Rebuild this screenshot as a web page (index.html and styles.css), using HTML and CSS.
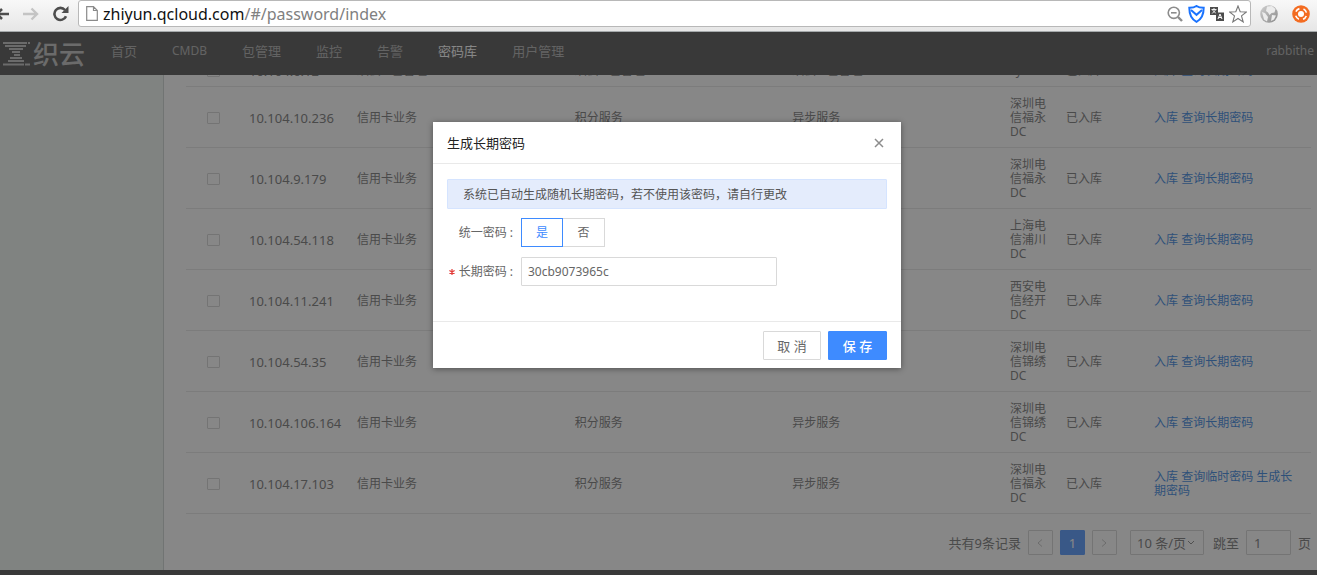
FILE: index.html
```html
<!DOCTYPE html>
<html lang="zh-CN">
<head>
<meta charset="utf-8">
<title>织云 - 密码库</title>
<link rel="stylesheet" href="styles.css">
</head>
<body>
<div class="window">
  <div class="toolbar">
    <button class="tool back" type="button" aria-label="后退"><svg width="9" height="16" viewBox="0 0 9 16"><path d="M9 8H0M2 3L-3 8l5 5" fill="none" stroke="#4d4d4d" stroke-width="2.6"/></svg></button>
    <button class="tool" type="button" aria-label="前进"><svg width="16" height="16" viewBox="0 0 16 16"><path d="M0 8h14M8.500 2.500L14 8l-5.500 5.500" fill="none" stroke="#c4c4c4" stroke-width="2.400"/></svg></button>
    <button class="tool" type="button" aria-label="刷新"><svg width="16" height="16" viewBox="0 0 16 16"><path d="M13 10.200A6 6 0 1 1 12 4" fill="none" stroke="#4d4d4d" stroke-width="2.600"/><path d="M15.500 0v7h-7z" fill="#4d4d4d"/></svg></button>
    <div class="omnibox">
      <svg width="12" height="15" viewBox="0 0 12 15"><path d="M.7.700h6.800l3.800 3.800v9.800H.7zM7.500.700v3.800h3.800" fill="#fff" stroke="#8a8a8a" stroke-width="1.200"/></svg>
      <div class="url">zhiyun.qcloud.com<span>/#/password/index</span></div>
      <svg width="16" height="16" viewBox="0 0 16 16"><circle cx="6.800" cy="6.800" r="5.600" fill="none" stroke="#8c8c8c" stroke-width="1.600"/><path d="M4 6.800h5.600" stroke="#8c8c8c" stroke-width="1.600"/><path d="M11 11l4 4" stroke="#8c8c8c" stroke-width="2.400"/></svg>
      <svg width="17" height="18" viewBox="0 0 17 18"><path d="M8.500 1c2 1.500 4.500 1.800 7.200 1.800 0 6-1 11-7.200 14C2.300 13.800 1.300 8.800 1.300 2.800 4 2.800 6.500 2.500 8.500 1z" fill="#fff" stroke="#1a73ff" stroke-width="2"/><path d="M3 5l5.500 4.800L14 5" fill="none" stroke="#1a73ff" stroke-width="2"/></svg>
      <svg width="14" height="14" viewBox="0 0 14 14"><path d="M0 0h8v8H0z" fill="#4d4d4d"/><path d="M1.500 2.500h5M4 1v1.500M2.200 6.500L5.500 3M2.500 3l3.500 3.500" stroke="#fff" stroke-width=".9"/><path d="M6 5.500h8V14H6z" fill="#4d4d4d"/><path d="M8 12l2-5 2 5M8.800 10.500h2.400" fill="none" stroke="#fff"/></svg>
      <svg width="18" height="18" viewBox="0 0 18 18"><path d="M9 1l2.200 5.800 6.200.2-4.900 3.900 1.700 6L9 13.500l-5.200 3.400 1.700-6L.6 7l6.200-.2z" fill="#fff" stroke="#777" stroke-width="1.100"/></svg>
    </div>
    <svg width="18" height="18" viewBox="0 0 18 18"><defs><linearGradient id="globe" x2="1" y2="1"><stop stop-color="#d0d0d0"/><stop offset="1" stop-color="#8a8a8a"/></linearGradient></defs><circle cx="9" cy="9" r="8.800" fill="url(#globe)"/><path d="M7 1.500l5-.5 3.500 3-1 3.500-3 .5-2 2-1.500-2.500L6 6zM2 7l3 1 3 4-1 4.500-3-2zM12 10l4 .5-2 4-3 1.500z" fill="#ececec"/></svg>
    <svg width="18" height="18" viewBox="0 0 18 18"><circle cx="9" cy="9" r="8.800" fill="#f36c21"/><circle cx="9" cy="9" r="3" fill="#fff"/><circle cx="9" cy="9" r="5.600" fill="none" stroke="#fff" stroke-width="1.600" stroke-dasharray="4.600 4.200" transform="rotate(20 9 9)"/></svg>
  </div>

  <div class="app">
    <header class="header">
      <a class="logo" href="#"><svg width="27" height="24" viewBox="0 0 27 24"><path d="M0 1h24M25 1h2M2 4h21M6 7h14M9 10h8M11 13h6M7 16h12M5 19h16M0 22.500h21M22 22.500h5" stroke="#b9b9b9" stroke-width="1.800"/></svg><span>织云</span></a>
      <nav class="nav">
        <a href="#">首页</a><a class="latin" href="#">CMDB</a><a href="#">包管理</a><a href="#">监控</a><a href="#">告警</a><a class="current" href="#">密码库</a><a href="#">用户管理</a>
      </nav>
      <a class="user latin" href="#">rabbithe</a>
    </header>
    <div class="content">
      <aside class="sidebar"></aside>
      <main class="main">
        <table class="hosts">
          <colgroup><col class="c-check"><col class="c-ip"><col><col><col><col class="c-room"><col class="c-state"><col class="c-ops"></colgroup>
          <tbody>
            <tr><td><input type="checkbox" aria-label="10.104.6.12"></td><td class="ip">10.104.6.12</td><td>织云 - 包管理</td><td>织云 - 包管理</td><td>织云 - 包管理</td><td>sy</td><td>已入库</td><td><a href="#">入库</a> <a href="#">查询长期密码</a></td></tr>
            <tr><td><input type="checkbox" aria-label="10.104.10.236"></td><td class="ip">10.104.10.236</td><td>信用卡业务</td><td>积分服务</td><td>异步服务</td><td>深圳电信福永DC</td><td>已入库</td><td><a href="#">入库</a> <a href="#">查询长期密码</a></td></tr>
            <tr><td><input type="checkbox" aria-label="10.104.9.179"></td><td class="ip">10.104.9.179</td><td>信用卡业务</td><td>积分服务</td><td>异步服务</td><td>深圳电信福永DC</td><td>已入库</td><td><a href="#">入库</a> <a href="#">查询长期密码</a></td></tr>
            <tr><td><input type="checkbox" aria-label="10.104.54.118"></td><td class="ip">10.104.54.118</td><td>信用卡业务</td><td>积分服务</td><td>异步服务</td><td>上海电信浦川DC</td><td>已入库</td><td><a href="#">入库</a> <a href="#">查询长期密码</a></td></tr>
            <tr><td><input type="checkbox" aria-label="10.104.11.241"></td><td class="ip">10.104.11.241</td><td>信用卡业务</td><td>积分服务</td><td>异步服务</td><td>西安电信经开DC</td><td>已入库</td><td><a href="#">入库</a> <a href="#">查询长期密码</a></td></tr>
            <tr><td><input type="checkbox" aria-label="10.104.54.35"></td><td class="ip">10.104.54.35</td><td>信用卡业务</td><td>积分服务</td><td>异步服务</td><td>深圳电信锦绣DC</td><td>已入库</td><td><a href="#">入库</a> <a href="#">查询长期密码</a></td></tr>
            <tr><td><input type="checkbox" aria-label="10.104.106.164"></td><td class="ip">10.104.106.164</td><td>信用卡业务</td><td>积分服务</td><td>异步服务</td><td>深圳电信锦绣DC</td><td>已入库</td><td><a href="#">入库</a> <a href="#">查询长期密码</a></td></tr>
            <tr><td><input type="checkbox" aria-label="10.104.17.103"></td><td class="ip">10.104.17.103</td><td>信用卡业务</td><td>积分服务</td><td>异步服务</td><td>深圳电信福永DC</td><td>已入库</td><td><a href="#">入库</a> <a href="#">查询临时密码</a> <a href="#">生成长期密码</a></td></tr>
          </tbody>
        </table>
        <div class="pager">
          <span>共有9条记录</span>
          <button class="page" type="button" aria-label="上一页"><svg width="6" height="8" viewBox="0 0 6 8"><path d="M5 .5L1 4l4 3.500" fill="none" stroke="#bbb"/></svg></button>
          <button class="page active" type="button">1</button>
          <button class="page" type="button" aria-label="下一页"><svg width="6" height="8" viewBox="0 0 6 8"><path d="M1 .5L5 4 1 7.500" fill="none" stroke="#bbb"/></svg></button>
          <span class="size"><select aria-label="每页条数"><option>10 条/页</option></select><svg width="8" height="6" viewBox="0 0 8 6"><path d="M1 1l3 3 3-3" fill="none" stroke="#777"/></svg></span>
          <label for="jump">跳至</label>
          <input class="jump" id="jump" type="text" value="1">
          <span>页</span>
        </div>
      </main>
    </div>
    <footer class="footer"></footer>

    <div class="mask">
      <form class="dialog" role="dialog" aria-labelledby="dialog-title">
        <div class="dialog-head">
          <h2 id="dialog-title">生成长期密码</h2>
          <button class="close" type="button" aria-label="关闭"><svg width="10" height="10" viewBox="0 0 10 10"><path d="M1 1l8 8M9 1L1 9" stroke="#8c8c8c" stroke-width="1.500"/></svg></button>
        </div>
        <div class="dialog-body">
          <p class="notice">系统已自动生成随机长期密码，若不使用该密码，请自行更改</p>
          <div class="field" role="radiogroup" aria-labelledby="unified">
            <span class="label" id="unified">统一密码 :</span>
            <div class="choice">
              <label><input type="radio" name="unified" checked>是</label><label><input type="radio" name="unified">否</label>
            </div>
          </div>
          <div class="field">
            <label class="label" for="password"><svg width="6" height="6" viewBox="0 0 6 6"><path d="M3 0v6M.4 1.500l5.200 3M5.600 1.500l-5.200 3" stroke="#e23c39" stroke-width="1.200"/></svg>长期密码 :</label>
            <input class="text" id="password" type="text" value="30cb9073965c">
          </div>
        </div>
        <div class="dialog-foot">
          <button class="btn" type="button">取 消</button>
          <button class="btn primary" type="submit">保 存</button>
        </div>
      </form>
    </div>
  </div>
</div>
</body>
</html>
```

FILE: styles.css
```css
* { box-sizing: border-box; }
body {
  margin: 0;
  font: 12px/14px "Noto Sans", "Noto Sans CJK SC", sans-serif;
  color: #666;
}
a { color: #2277dd; text-decoration: none; }
button, input, select { font: inherit; color: inherit; margin: 0; }
button { cursor: pointer; }
svg { display: block; flex: none; }

.window { display: flex; flex-direction: column; height: 100vh; }

/* Browser toolbar */
.toolbar {
  display: flex;
  align-items: center;
  gap: 14px;
  flex: none;
  height: 32px;
  padding: 0 7px 4px 0;
  background: linear-gradient(#f8f8f8, #e6e6e6);
  border-bottom: 1px solid #a5a9ab;
}
.tool { padding: 0; border: 0; background: none; }
.omnibox {
  display: flex;
  align-items: center;
  gap: 5px;
  flex: 1;
  height: 27px;
  margin: 0 -5px;
  padding: 0 3px 0 7px;
  background: #fff;
  border: 1px solid #b8b8b8;
  border-radius: 3px;
}
.url { flex: 1; font-size: 16px; line-height: 24px; color: #111; }
.url span { color: #808080; }

/* Application */
.app { position: relative; display: flex; flex-direction: column; flex: 1; min-height: 0; }
.header {
  display: flex;
  align-items: center;
  flex: none;
  height: 43px;
  padding: 0 3px;
  background: #3e3e3e;
  font-size: 13px;
}
.logo { display: flex; align-items: center; gap: 3px; color: #b9b9b9; font-size: 26px; line-height: 32px; font-weight: 500; }
.nav { display: flex; flex: 1; gap: 35px; padding: 0 0 6px 26px; }
.nav a, .user { color: #a5a5a5; line-height: 18px; }
.nav .current { color: #fff; }
.user { padding-bottom: 6px; }
.latin { font-size: 12px; }
.content { display: flex; flex: 1; min-height: 0; }
.sidebar { flex: none; width: 164px; background: #edf5f0; border-right: 1px solid #c9cfcc; }
.main {
  display: flex;
  flex-direction: column;
  justify-content: flex-end;
  flex: 1;
  min-width: 0;
  overflow: hidden;
  padding: 0 6px 15px 22px;
  background: #fff;
}
.footer { flex: none; height: 5px; background: #3e3e3e; }

.hosts { width: 100%; table-layout: fixed; border-collapse: collapse; }
.hosts td { padding: 10px 8px 8px; border-bottom: 1px solid #e3e3e3; }
.hosts td:first-child { text-align: center; }
.hosts .ip { font-size: 13px; white-space: nowrap; }
.c-check { width: 55px; }
.c-ip { width: 108px; }
.c-room { width: 56px; }
.c-state { width: 88px; }
.c-ops { width: 165px; }
.hosts input {
  display: block;
  width: 13px;
  height: 12px;
  margin: 0 auto;
  appearance: none;
  border: 1px solid #cfcfcf;
  border-radius: 1px;
}

.pager {
  display: flex;
  align-items: center;
  justify-content: flex-end;
  gap: 7px;
  margin-top: 16px;
  font-size: 13px;
}
.page, .jump, .size select { height: 25px; border: 1px solid #d0d0d0; border-radius: 1px; background: #fff; }
.page { display: flex; align-items: center; justify-content: center; width: 25px; padding: 0; }
.page.active { background: #3e8bff; border-color: #3e8bff; color: #fff; }
.size { display: grid; align-items: center; margin: 0 2px 0 6px; }
.size select, .size svg { grid-area: 1 / 1; }
.size select { width: 74px; padding: 0 6px; appearance: none; }
.size svg { justify-self: end; margin-right: 9px; pointer-events: none; }
.jump { width: 45px; padding: 0 7px; }

/* Dialog */
.mask {
  position: absolute;
  inset: 0;
  display: flex;
  align-items: flex-start;
  justify-content: center;
  padding: 90px 0 0 17px;
  background: rgba(55, 55, 55, .6);
}
.dialog { width: 468px; background: #fff; box-shadow: 0 1px 6px rgba(0, 0, 0, .4); }
.dialog-head {
  display: flex;
  align-items: center;
  justify-content: space-between;
  height: 42px;
  padding: 0 14px;
  border-bottom: 1px solid #e9e9e9;
}
.dialog-head h2 { margin: 0; font-size: 13px; font-weight: 400; line-height: 18px; color: #222; }
.close { padding: 3px; border: 0; background: none; }
.dialog-body { padding: 15px 14px 35px; }
.notice {
  margin: 0 0 9px;
  padding: 8px 15px 6px;
  color: #555;
  background: #e4ecfc;
  border: 1px solid #d5e4ff;
  border-radius: 1px;
}
.field { display: flex; align-items: center; }
.field + .field { margin-top: 10px; }
.label { display: flex; align-items: center; justify-content: flex-end; gap: 4px; width: 74px; padding-right: 8px; }
.choice { display: flex; }
.choice label {
  display: flex;
  align-items: center;
  justify-content: center;
  width: 42px;
  height: 29px;
  border: 1px solid #d9d9d9;
  cursor: pointer;
}
.choice label + label { border-left: 0; }
.choice label:has(:checked) { border: 1px solid #3e8bff; color: #3e8bff; }
.choice input { appearance: none; width: 0; height: 0; }
.text { width: 256px; height: 29px; padding: 0 6px; border: 1px solid #d9d9d9; border-radius: 1px; background: #fff; }
.dialog-foot { display: flex; justify-content: flex-end; gap: 7px; padding: 9px 14px 8px; border-top: 1px solid #e9e9e9; }
.btn { width: 58px; height: 29px; padding: 0; border: 1px solid #d9d9d9; border-radius: 1px; background: #fff; font-size: 13px; }
.primary { width: 59px; background: #3e8bff; border-color: #3e8bff; color: #fff; font-weight: 500; }
```
